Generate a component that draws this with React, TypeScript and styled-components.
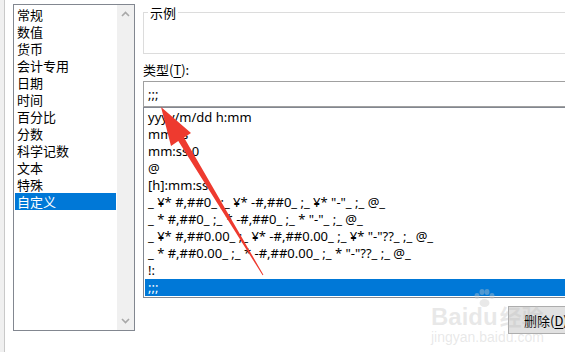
import React from 'react'
import styled, { createGlobalStyle } from 'styled-components'

const GlobalStyle = createGlobalStyle`
  html, body {
    margin: 0;
    padding: 0;
    background: #fff;
  }
  body {
    width: 565px;
    height: 352px;
    overflow: hidden;
    font-family: "Noto Sans", "Noto Sans CJK SC", sans-serif;
    font-size: 13px;
    color: #000;
  }
`

const CATEGORIES = [
  '常规',
  '数值',
  '货币',
  '会计专用',
  '日期',
  '时间',
  '百分比',
  '分数',
  '科学记数',
  '文本',
  '特殊',
  '自定义',
]

const FORMATS = [
  'yyyy/m/dd h:mm',
  'mm:ss',
  'mm:ss.0',
  '@',
  '[h]:mm:ss',
  '_ ¥* #,##0_ ;_ ¥* -#,##0_ ;_ ¥* "-"_ ;_ @_',
  '_ * #,##0_ ;_ * -#,##0_ ;_ * "-"_ ;_ @_',
  '_ ¥* #,##0.00_ ;_ ¥* -#,##0.00_ ;_ ¥* "-"??_ ;_ @_',
  '_ * #,##0.00_ ;_ * -#,##0.00_ ;_ * "-"??_ ;_ @_',
  '!:',
  ';;;',
]

const Page = styled.div`
  position: relative;
  display: flex;
  width: 565px;
  height: 352px;
  overflow: hidden;
`

const LeftEdge = styled.div`
  flex: none;
  width: 4px;
  background: #f0f0f0;
  border-right: 1px solid #c9c9c9;
`

const CategoryBox = styled.div`
  flex: none;
  display: flex;
  width: 120px;
  height: 325px;
  margin: 4px 0 0 8px;
  border: 1px solid #828790;
`

const CategoryItems = styled.ul`
  flex: 1;
  list-style: none;
  margin: 0;
  padding: 1px;
`

const Item = styled.li<{ $selected?: boolean }>`
  height: 17px;
  line-height: 17px;
  padding-left: 2px;
  white-space: nowrap;
  overflow: hidden;
  font-family: "Noto Sans CJK SC", sans-serif;
  font-size: 13px;
  background: ${(p) => (p.$selected ? '#0078d7' : 'transparent')};
  color: ${(p) => (p.$selected ? '#fff' : '#000')};
`

const Scrollbar = styled.div`
  flex: none;
  width: 17px;
  background: #f0f0f0;
  display: flex;
  flex-direction: column;
  justify-content: space-between;
  align-items: center;
  padding: 6px 0;
`

const Chevron = ({ up }: { up?: boolean }) => (
  <svg width="9" height="6" viewBox="0 0 9 6">
    <path
      d={up ? 'M1 5L4.5 1.5L8 5' : 'M1 1L4.5 4.5L8 1'}
      fill="none"
      stroke="#a8a8a8"
      strokeWidth="1.6"
    />
  </svg>
)

const RightPane = styled.div`
  flex: none;
  width: 440px;
  margin-left: 8px;
  display: flex;
  flex-direction: column;
`

const GroupBox = styled.fieldset`
  margin: 4px 0 0;
  padding: 0;
  height: 50px;
  box-sizing: border-box;
  border: 1px solid #dcdcdc;
  min-width: 0;
`

const Legend = styled.legend`
  margin-left: 4px;
  padding: 0 2px;
  font-family: "Noto Sans CJK SC", sans-serif;
  font-size: 13px;
  line-height: 17px;
`

const FieldLabel = styled.div`
  margin-top: 7px;
  height: 17px;
  line-height: 17px;
  font-family: "Noto Sans CJK SC", sans-serif;
  font-size: 13px;

  u {
    text-underline-offset: 2px;
  }
`

const TypeInput = styled.div`
  margin-top: 3px;
  height: 24px;
  line-height: 24px;
  padding-left: 4px;
  border: 1px solid #a0a0a0;
  font-size: 13px;
`

const FormatBox = styled.div`
  height: 188px;
  padding-top: 1px;
  border: 1px solid #828790;
  overflow: hidden;
`

const FormatItem = styled.div<{ $selected?: boolean }>`
  height: 17px;
  line-height: 17px;
  padding-left: 3px;
  margin-left: 1px;
  white-space: nowrap;
  font-size: 13px;
  background: ${(p) => (p.$selected ? '#0078d7' : 'transparent')};
  color: ${(p) => (p.$selected ? '#fff' : '#000')};
`

const ButtonRow = styled.div`
  display: flex;
  justify-content: flex-end;
  margin-top: 8px;
`

const DeleteButton = styled.button`
  width: 75px;
  height: 28px;
  padding: 0 0 0 15px;
  text-align: left;
  white-space: nowrap;
  background: #e1e1e1;
  border: 1px solid #adadad;
  font-family: "Noto Sans CJK SC", sans-serif;
  font-size: 13px;
  color: #000;

  u {
    text-underline-offset: 2px;
  }
`

const Watermark = styled.div`
  position: absolute;
  left: 431px;
  top: 288px;
  display: flex;
  flex-direction: column;
  align-items: flex-start;
  color: rgba(190, 190, 190, 0.35);
  pointer-events: none;
`

const WatermarkTitle = styled.div`
  font-family: "Liberation Sans", sans-serif;
  font-weight: 700;
  font-size: 24px;
  line-height: 26px;
  margin-top: 14px;

  span {
    font-family: "Noto Sans CJK SC", sans-serif;
    font-size: 22px;
    margin-left: 2px;
  }
`

const WatermarkUrl = styled.div`
  font-family: "Liberation Sans", sans-serif;
  font-size: 14px;
  line-height: 15px;
`

const ArrowLayer = styled.svg`
  position: absolute;
  left: 0;
  top: 0;
  pointer-events: none;
`

const Paw = () => (
  <svg
    width="24"
    height="20"
    viewBox="0 0 24 20"
    style={{ position: 'absolute', left: 41, top: 0 }}
  >
    <g fill="rgba(200,200,200,0.4)">
      <ellipse cx="5" cy="8" rx="2.5" ry="3" />
      <ellipse cx="10" cy="4" rx="2.5" ry="3" />
      <ellipse cx="15" cy="4" rx="2.5" ry="3" />
      <ellipse cx="20" cy="8" rx="2.5" ry="3" />
      <ellipse cx="12.5" cy="15" rx="5" ry="4" />
    </g>
  </svg>
)

export default function App() {
  return (
    <>
      <GlobalStyle />
      <Page>
        <LeftEdge />
        <CategoryBox>
          <CategoryItems>
            {CATEGORIES.map((c, i) => (
              <Item key={c} $selected={i === CATEGORIES.length - 1}>
                {c}
              </Item>
            ))}
          </CategoryItems>
          <Scrollbar>
            <Chevron up />
            <Chevron />
          </Scrollbar>
        </CategoryBox>
        <RightPane>
          <GroupBox>
            <Legend>示例</Legend>
          </GroupBox>
          <FieldLabel>
            类型(<u>T</u>):
          </FieldLabel>
          <TypeInput>;;;</TypeInput>
          <FormatBox>
            {FORMATS.map((f, i) => (
              <FormatItem key={f} $selected={i === FORMATS.length - 1}>
                {f}
              </FormatItem>
            ))}
          </FormatBox>
          <ButtonRow>
            <DeleteButton>
              删除(<u>D</u>)
            </DeleteButton>
          </ButtonRow>
        </RightPane>
        <Watermark>
          <Paw />
          <WatermarkTitle>
            Baidu<span>经验</span>
          </WatermarkTitle>
          <WatermarkUrl>jingyan.baidu.com</WatermarkUrl>
        </Watermark>
        <ArrowLayer width="565" height="352" viewBox="0 0 565 352">
          <polygon
            points="161,107 191,133 184,137.5 263.4,274.7 262.6,275.3 178.3,141 171,146"
            fill="#ee3a2f"
          />
        </ArrowLayer>
      </Page>
    </>
  )
}
